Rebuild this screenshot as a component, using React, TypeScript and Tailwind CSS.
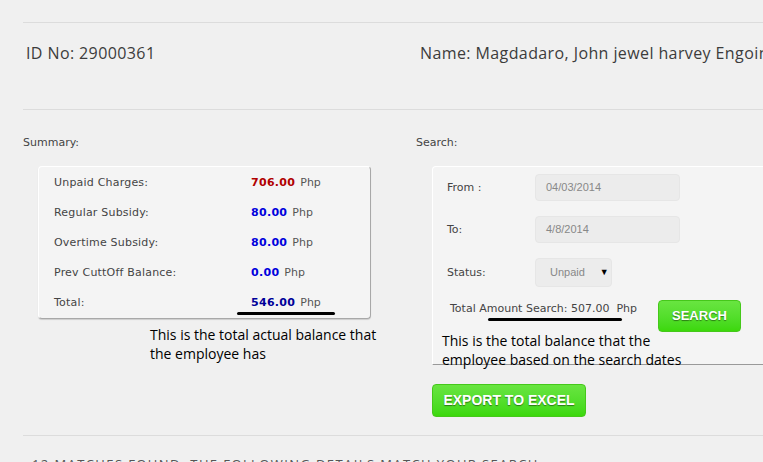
import React from "react";

const tah = { fontFamily: '"DejaVu Sans", Verdana, sans-serif' } as const;
const ann = { fontFamily: '"Open Sans", sans-serif' } as const;
const arial = { fontFamily: '"Liberation Sans", Arial, sans-serif' } as const;

function GreenButton({ children, className }: { children: React.ReactNode; className: string }) {
  return (
    <div
      className={
        "flex items-center justify-center rounded-[4px] border border-[#45c81a] bg-gradient-to-b from-[#68e540] to-[#3cd80a] font-bold text-white [text-shadow:0_1px_1px_rgba(0,0,0,0.45)] " +
        className
      }
      style={arial}
    >
      {children}
    </div>
  );
}

export default function App() {
  const rows = [
    { label: "Unpaid Charges:", value: "706.00", color: "text-[#b00000]" },
    { label: "Regular Subsidy:", value: "80.00", color: "text-[#0000dd]" },
    { label: "Overtime Subsidy:", value: "80.00", color: "text-[#0000dd]" },
    { label: "Prev CuttOff Balance:", value: "0.00", color: "text-[#0000dd]" },
    { label: "Total:", value: "546.00", color: "text-[#000099]" },
  ];
  return (
    <div className="w-[763px] h-[462px] overflow-hidden bg-[#f0f0f0] pl-[23px] text-[#333]">
      <div className="h-[22px]" />
      <div
        className="flex h-[87px] items-start border-t border-[#dcdcdc] pt-[19px] text-[16px] leading-[22px] tracking-[0.4px] text-[#3c3c3c] whitespace-nowrap"
        style={ann}
      >
        <div className="ml-[3px] w-[394px] shrink-0">ID No: 29000361</div>
        <div className="shrink-0">Name: Magdadaro, John jewel harvey Engoinco</div>
      </div>
      <div className="flex border-t border-[#dcdcdc]">
        {/* Summary */}
        <div className="w-[393px] shrink-0">
          <div className="pt-[26px] text-[11px] leading-[14px] text-[#444]" style={tah}>
            Summary:
          </div>
          <div
            className="relative mt-[16px] ml-[15px] h-[153px] w-[333px] rounded-[4px] border border-t-white border-l-white border-r-[#a8a8a8] border-b-[#a8a8a8] bg-[#f4f4f4] pt-[1px] shadow-[0_1px_1px_rgba(0,0,0,0.15)]"
            style={tah}
          >
            {rows.map((r) => (
              <div key={r.label} className="flex h-[30px] items-center pl-[15px] text-[11px] text-[#444]">
                <div className="w-[197px] tracking-[0.2px]">{r.label}</div>
                <span className={"font-bold tracking-[0.3px] " + r.color}>{r.value}</span>
                <span className="ml-[5px] text-[#555]">Php</span>
              </div>
            ))}
            <div className="absolute left-[198px] top-[145px] h-[3px] w-[98px] rounded-full bg-black" />
          </div>
          <div className="mt-[6px] ml-[127px] text-[14px] leading-[19px] text-black" style={ann}>
            This is the total actual balance that
            <br />
            the employee has
          </div>
        </div>
        {/* Search */}
        <div className="flex-1">
          <div className="pt-[26px] text-[11px] leading-[14px] text-[#444]" style={tah}>
            Search:
          </div>
          <div className="mt-[16px] ml-[16px] h-[199px] w-[400px] rounded-tl-[4px] border-t border-l border-b border-t-white border-l-white border-b-[#999] bg-[#f4f4f4] pt-[7px]">
            <div className="flex items-center pl-[14px]">
              <div className="w-[88px] pt-[2px] text-[11px] text-[#444]" style={tah}>
                From :
              </div>
              <div
                className="flex h-[27px] w-[145px] items-center rounded-[4px] border border-[#e6e6e6] bg-[#ececec] pl-[10px] text-[11px] text-[#888]"
                style={arial}
              >
                04/03/2014
              </div>
            </div>
            <div className="mt-[15px] flex items-center pl-[14px]">
              <div className="w-[88px] pt-[2px] text-[11px] text-[#444]" style={tah}>
                To:
              </div>
              <div
                className="flex h-[27px] w-[145px] items-center rounded-[4px] border border-[#e6e6e6] bg-[#ececec] pl-[10px] text-[11px] text-[#888]"
                style={arial}
              >
                4/8/2014
              </div>
            </div>
            <div className="mt-[15px] flex items-center pl-[14px]">
              <div className="w-[88px] pt-[2px] text-[11px] text-[#444]" style={tah}>
                Status:
              </div>
              <div
                className="flex h-[29px] w-[77px] items-center rounded-[4px] border border-[#e6e6e6] bg-[#ececec] pl-[14px] text-[11px] text-[#888]"
                style={arial}
              >
                Unpaid
                <span className="ml-[15px] text-[9px] text-black">▼</span>
              </div>
            </div>
            <div className="mt-[13px] flex items-start">
              <div className="relative pl-[17px] pt-[2px] text-[11px] leading-[14px] text-[#444] whitespace-nowrap" style={tah}>
                Total Amount Search: 507.00&nbsp;&nbsp;Php
                <div className="absolute left-[55px] top-[18px] h-[3px] w-[134px] rounded-full bg-black" />
              </div>
              <GreenButton className="ml-[21px] h-[32px] w-[83px] text-[13px]">SEARCH</GreenButton>
            </div>
            <div className="-mt-[1px] pl-[9px] text-[14px] leading-[19px] text-black whitespace-nowrap" style={ann}>
              This is the total balance that the
              <br />
              employee based on the search dates
            </div>
          </div>
          <GreenButton className="mt-[19px] ml-[16px] h-[33px] w-[154px] text-[14px]">EXPORT TO EXCEL</GreenButton>
        </div>
      </div>
      <div className="mt-[18px] border-t border-[#dcdcdc] pt-[19px] pl-[9px] text-[13px] leading-[18px] tracking-[1.4px] text-[#555] whitespace-nowrap" style={ann}>
        12 MATCHES FOUND. THE FOLLOWING DETAILS MATCH YOUR SEARCH
      </div>
    </div>
  );
}
